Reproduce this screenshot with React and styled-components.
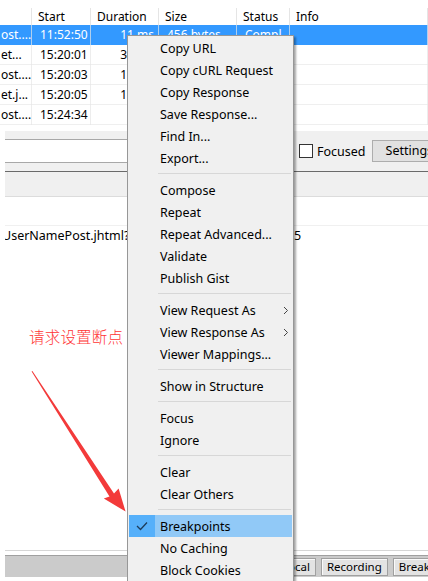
import React from 'react';
import styled, { createGlobalStyle } from 'styled-components';

const GlobalStyle = createGlobalStyle`
  body {
    margin: 0;
    background: #fff;
    font-family: "Noto Sans", "Noto Sans CJK SC", sans-serif;
    font-size: 12px;
    color: #000;
  }
`;

const columns = [
  { key: 'url', title: '', width: 32 },
  { key: 'start', title: 'Start', width: 59 },
  { key: 'duration', title: 'Duration', width: 68, align: 'right' },
  { key: 'size', title: 'Size', width: 78 },
  { key: 'status', title: 'Status', width: 53 },
  { key: 'info', title: 'Info', width: 138 },
];

const sessions = [
  { url: 'ost....', start: '11:52:50', duration: '11 ms', size: '456 bytes', status: 'Compl', selected: true },
  { url: 'et...', start: '15:20:01', duration: '34 ms', size: '', status: '' },
  { url: 'ost....', start: '15:20:03', duration: '16 ms', size: '', status: '' },
  { url: 'et.j...', start: '15:20:05', duration: '15 ms', size: '', status: '' },
  { url: 'ost....', start: '15:24:34', duration: '', size: '', status: '' },
];

const menuGroups = [
  ['Copy URL', 'Copy cURL Request', 'Copy Response', 'Save Response...', 'Find In...', 'Export...'],
  ['Compose', 'Repeat', 'Repeat Advanced...', 'Validate', 'Publish Gist'],
  [{ label: 'View Request As', sub: true }, { label: 'View Response As', sub: true }, 'Viewer Mappings...'],
  ['Show in Structure'],
  ['Focus', 'Ignore'],
  ['Clear', 'Clear Others'],
  [{ label: 'Breakpoints', checked: true }, 'No Caching', 'Block Cookies'],
];

const App = () => {
  return (
    <>
      <GlobalStyle />
      <Page>
        <SessionTable>
          <HeaderRow>
            {columns.map((c) => (
              <HeaderCell key={c.key} $width={c.width}>
                {c.title}
              </HeaderCell>
            ))}
          </HeaderRow>
          {sessions.map((s, i) => (
            <Row key={i} $selected={s.selected}>
              {columns.map((c) => (
                <Cell key={c.key} $width={c.width} $align={c.align} $first={c.key === 'url'}>
                  {s[c.key]}
                </Cell>
              ))}
            </Row>
          ))}
        </SessionTable>

        <Toolbar>
          <FilterBox />
          <Checkbox />
          <ToolLabel>Focused</ToolLabel>
          <ToolButton>Settings</ToolButton>
        </Toolbar>

        <TabStrip />

        <Inspector>
          <InspectorLine />
          <InspectorRow>
            <UrlText>UserNamePost.jhtml?callback=jQuery19105</UrlText>
            <ValueText>5</ValueText>
          </InspectorRow>
        </Inspector>

        <StatusBar>
          <StatusButton>Local</StatusButton>
          <StatusButton>Recording</StatusButton>
          <StatusButton>Breakpoints</StatusButton>
        </StatusBar>

        <Note>请求设置断点</Note>
        <ArrowSvg width="140" height="160" viewBox="0 0 140 160">
          <polygon
            fill="#f33a3a"
            points="31.6,0.6 32.4,0.1 114.0,122.5 118.6,117.6 125.6,140.6 103.8,127.4 109.5,125.4"
          />
        </ArrowSvg>

        <Menu>
          {menuGroups.map((group, gi) => (
            <React.Fragment key={gi}>
              {gi > 0 && <Separator />}
              {group.map((item) => {
                const it = typeof item === 'string' ? { label: item } : item;
                return (
                  <MenuItem key={it.label} $active={it.checked}>
                    <CheckArea $active={it.checked}>
                      {it.checked && (
                        <svg width="12" height="10" viewBox="0 0 12 10">
                          <path d="M1 5 L4.5 8.5 L11 1.5" fill="none" stroke="#1e3c5a" strokeWidth="1.3" />
                        </svg>
                      )}
                    </CheckArea>
                    <MenuLabel>{it.label}</MenuLabel>
                    {it.sub && (
                      <SubArrow width="6" height="9" viewBox="0 0 6 9">
                        <path d="M1 1 L4.5 4.5 L1 8" fill="none" stroke="#444" strokeWidth="1" />
                      </SubArrow>
                    )}
                  </MenuItem>
                );
              })}
            </React.Fragment>
          ))}
        </Menu>
      </Page>
    </>
  );
};

// styled components
const Page = styled.div`
  position: relative;
  width: 428px;
  height: 581px;
  overflow: hidden;
  padding-top: 8px;
  box-sizing: border-box;
`;

const SessionTable = styled.div`
  display: flex;
  flex-direction: column;
`;

const HeaderRow = styled.div`
  display: flex;
  height: 17px;
  background: #fff;
`;

const HeaderCell = styled.div`
  flex: 0 0 ${(p) => p.$width}px;
  box-sizing: border-box;
  padding-left: 6px;
  border-right: 1px solid #e5e5e5;
  line-height: 17px;
  white-space: nowrap;
  overflow: hidden;
`;

const Row = styled.div`
  display: flex;
  height: 20px;
  background: ${(p) => (p.$selected ? '#3399ff' : '#fff')};
  color: ${(p) => (p.$selected ? '#fff' : '#000')};
  box-shadow: inset 0 -1px 0 ${(p) => (p.$selected ? '#3399ff' : '#efefef')};
`;

const Cell = styled.div`
  flex: 0 0 ${(p) => p.$width}px;
  box-sizing: border-box;
  padding: 0 ${(p) => (p.$align === 'right' ? '4px' : '0')} 0 ${(p) => (p.$first ? '1px' : '8px')};
  text-align: ${(p) => p.$align || 'left'};
  border-right: 1px solid rgba(230, 230, 230, 0.7);
  line-height: 20px;
  white-space: nowrap;
  overflow: hidden;
`;

const Toolbar = styled.div`
  display: flex;
  align-items: center;
  height: 40px;
  margin: 6px 0 0 5px;
  background: #f0f0f0;
  border-bottom: 1px solid #6a6a6a;
  overflow: hidden;
`;

const FilterBox = styled.div`
  flex: 0 0 270px;
  height: 22px;
  background: #fff;
  border-top: 1px solid #a8a8a8;
  border-bottom: 1px solid #a8a8a8;
  margin-right: 24px;
`;

const Checkbox = styled.div`
  flex: 0 0 auto;
  width: 12px;
  height: 12px;
  border: 1px solid #333;
  background: #fff;
  margin-right: 4px;
`;

const ToolLabel = styled.span`
  font-size: 12.5px;
  margin-right: 6px;
`;

const ToolButton = styled.div`
  flex: 0 0 auto;
  height: 20px;
  padding: 0 6px 0 13px;
  line-height: 20px;
  background: #e1e1e1;
  border: 1px solid #adadad;
  font-size: 12.5px;
  white-space: nowrap;
`;

const TabStrip = styled.div`
  height: 24px;
  margin-left: 5px;
  background: #f0f0f0;
  border-bottom: 1px solid #dcdcdc;
`;

const Inspector = styled.div`
  height: 353px;
  margin-left: 5px;
  border-bottom: 1px solid #d6d6d6;
  background: #fff;
`;

const InspectorLine = styled.div`
  height: 28px;
  border-bottom: 1px solid #f0f0f0;
`;

const InspectorRow = styled.div`
  display: flex;
  height: 20px;
  line-height: 20px;
  overflow: hidden;
`;

const UrlText = styled.span`
  flex: 0 0 292px;
  margin-left: -3px;
  font-size: 12.5px;
  white-space: nowrap;
  overflow: hidden;
`;

const ValueText = styled.span`
  font-size: 12.5px;
`;

const StatusBar = styled.div`
  display: flex;
  align-items: center;
  gap: 5px;
  height: 21px;
  margin: 4px 0 0 5px;
  padding-left: 271px;
  border-top: 1px solid #a0a0a0;
  background: #cbcbcb;
  overflow: hidden;
`;

const StatusButton = styled.div`
  flex: 0 0 auto;
  height: 16px;
  padding: 0 5px;
  line-height: 16px;
  font-size: 11.5px;
  background: #e3e3e3;
  border: 1px solid #a0a0a0;
  box-shadow: inset 1px 1px 0 #fafafa;
  white-space: nowrap;
`;

const Note = styled.div`
  position: absolute;
  left: 29px;
  top: 325px;
  font-family: "Noto Sans CJK SC", sans-serif;
  font-size: 15.5px;
  font-weight: 300;
  color: #ff3434;
  letter-spacing: 0.2px;
`;

const ArrowSvg = styled.svg`
  position: absolute;
  left: 0;
  top: 371px;
`;

const Menu = styled.div`
  position: absolute;
  left: 127px;
  top: 35px;
  width: 163px;
  padding: 1px 1px 0 1px;
  background: #f0f0f0;
  border: 1px solid #979797;
  box-shadow: 2px 2px 2px rgba(0, 0, 0, 0.35);
`;

const MenuItem = styled.div`
  display: flex;
  align-items: center;
  height: 22px;
  background: ${(p) => (p.$active ? '#91c9f7' : 'transparent')};
`;

const CheckArea = styled.div`
  flex: 0 0 26px;
  height: 22px;
  display: flex;
  align-items: center;
  justify-content: center;
  background: ${(p) => (p.$active ? '#56b0fa' : 'transparent')};
`;

const MenuLabel = styled.span`
  flex: 1;
  padding-left: 5px;
  font-size: 12.5px;
  white-space: nowrap;
`;

const SubArrow = styled.svg`
  margin-right: 3px;
`;

const Separator = styled.div`
  height: 1px;
  margin: 4px 1px 5px 29px;
  background: #d7d7d7;
`;

export default App;
